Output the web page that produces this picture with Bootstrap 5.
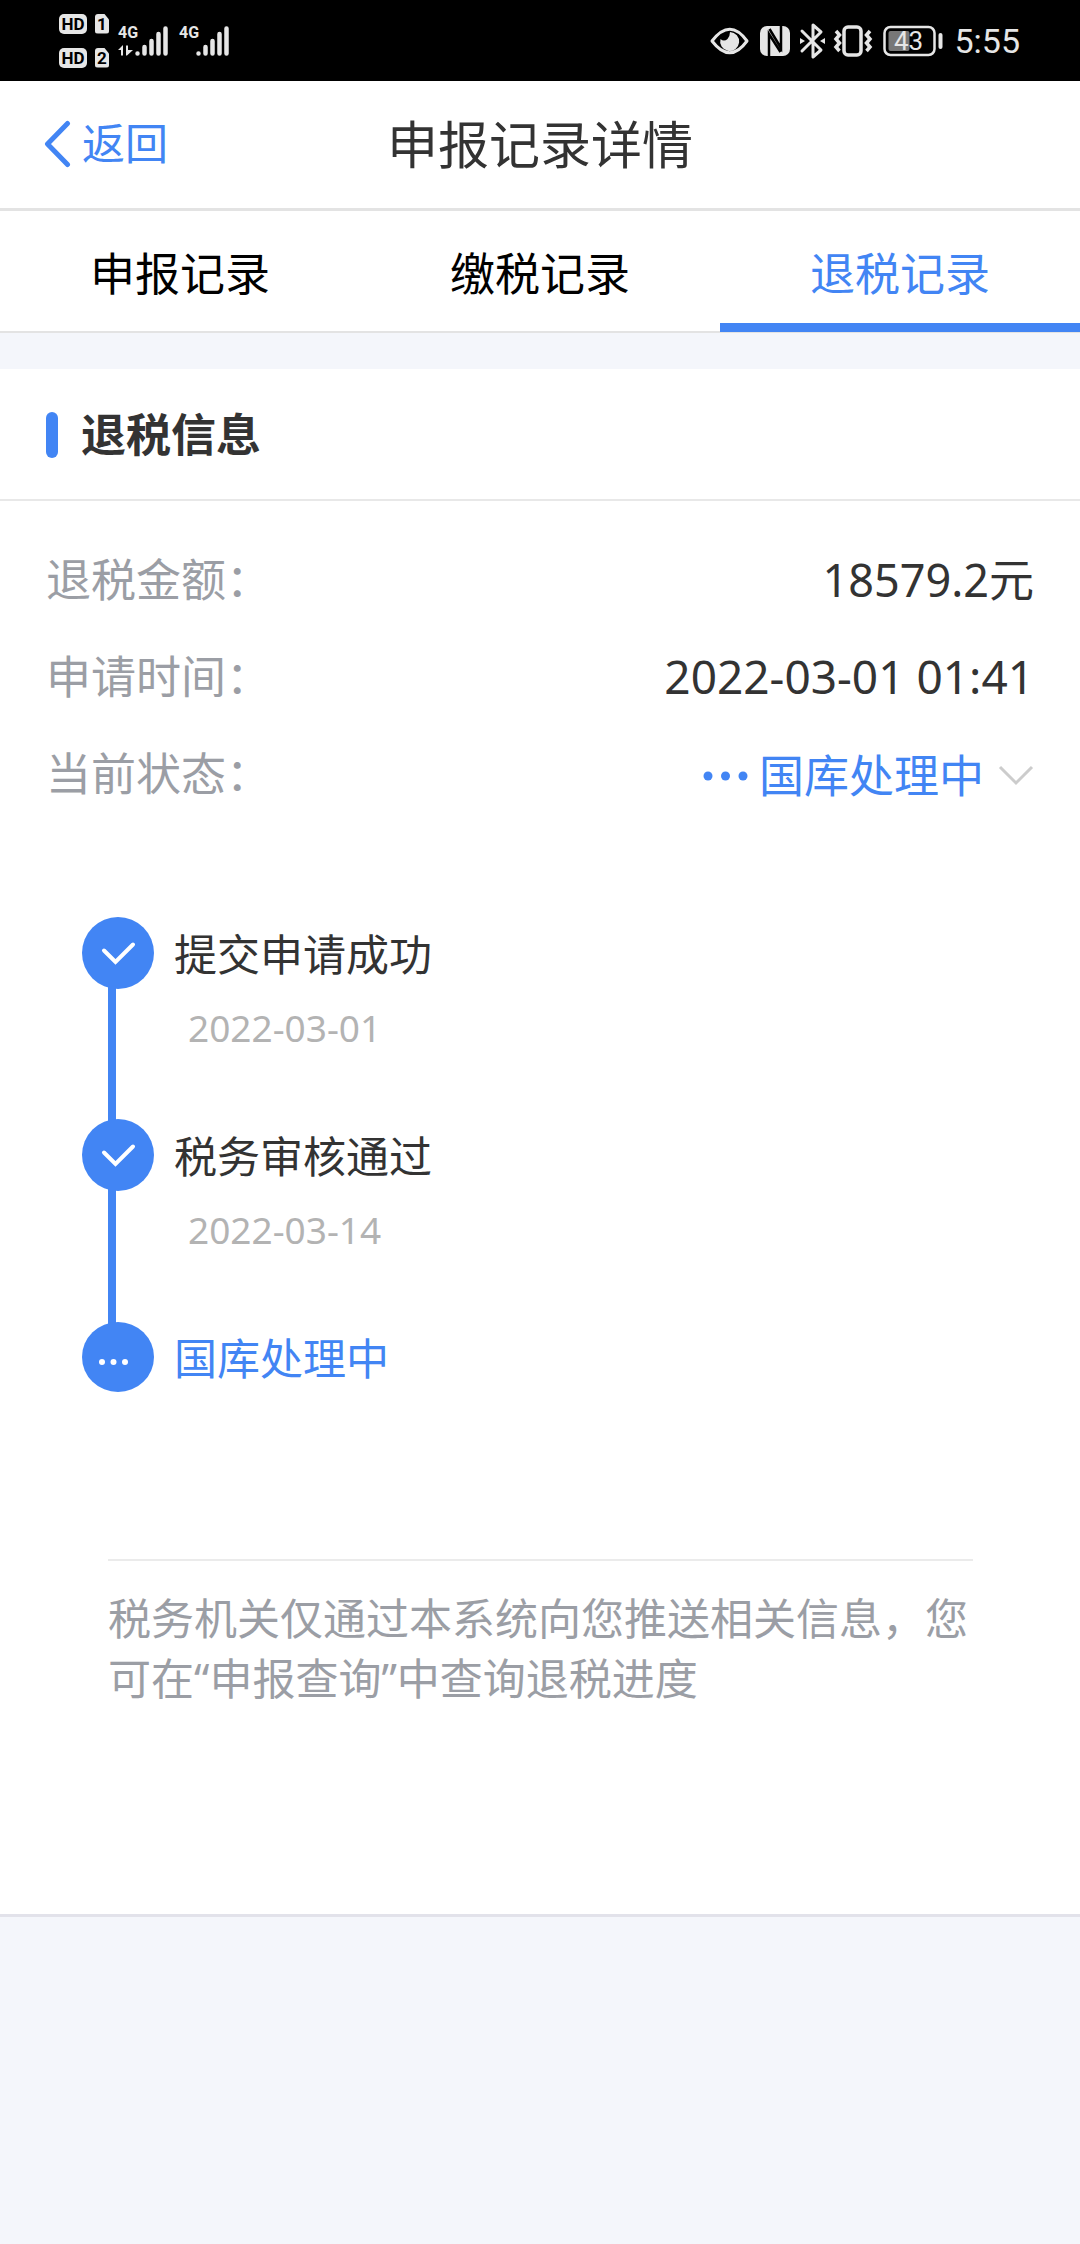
<!DOCTYPE html>
<html lang="zh-CN">
<head>
<meta charset="utf-8">
<meta name="viewport" content="width=device-width, initial-scale=1">
<title>申报记录详情</title>
<link href="https://cdn.jsdelivr.net/npm/bootstrap@5.3.0/dist/css/bootstrap.min.css" rel="stylesheet">
<style>
  :root { --brand: #4285f4; --ink: #333; --muted: #9b9ea5; --page: #f4f6fb; --rule: #e3e3e3; }
  body { font-family: "Noto Sans", "Noto Sans CJK SC", sans-serif; background: var(--page); color: var(--ink); }
  svg { display: block; flex: none; }

  .status-bar { height: 81px; padding: 0 60px 0 59px; background: #000; color: #e6e6e6; font-family: Roboto, sans-serif; }
  .hd-tags { gap: 14px; }
  .hd-tag, .sim-tag { height: 20px; line-height: 20px; font-size: 17px; font-weight: 700; background: #e6e6e6; color: #000; text-align: center; }
  .hd-tag { width: 28px; border-radius: 5px; }
  .sim-tag { width: 14px; border-radius: 3px; clip-path: polygon(0 0, 65% 0, 100% 30%, 100% 100%, 0 100%); }
  .clock { font-size: 34px; line-height: 40px; }

  .top-bar { height: 130px; padding-bottom: 2px; border-bottom: 3px solid var(--rule); }
  .side-cell { flex: 1 1 0; }
  .back-link { padding-left: 44px; gap: 10px; font-size: 43px; line-height: 60px; color: var(--brand); }
  .page-title { font-size: 51px; line-height: 60px; font-weight: 400; }

  .record-tabs { height: 122px; border-bottom: 2px solid var(--rule); }
  .record-tabs .nav-link { height: 121px; padding: 0; border: 0; border-bottom: 9px solid transparent; border-radius: 0; font-size: 45px; line-height: 126px; color: #000; }
  .record-tabs .nav-link.active { background: none; color: var(--brand); border-bottom-color: var(--brand); }

  .info-panel { margin-top: 36px; border-bottom: 3px solid #e2e2ea; padding-bottom: 205px; }
  .panel-head { height: 132px; padding: 2px 46px 0; gap: 23px; border-bottom: 2px solid #e8e8e8; }
  .head-bar { width: 12px; height: 46px; border-radius: 6px; background: var(--brand); }
  .panel-head h2 { font-size: 45px; line-height: 60px; font-weight: 700; }

  .detail-list { padding: 30px 46px 0; font-size: 45px; line-height: 97px; }
  .detail-list dt { font-weight: 400; color: var(--muted); }
  .detail-list .date-value { font-size: 46px; }
  .state-toggle { gap: 10px; padding: 0; border: 0; background: none; color: var(--brand); font-size: 45px; line-height: 101px; }
  .state-toggle svg:last-child { margin-left: 4px; }

  .steps { margin-top: 91px; padding: 0 82px; }
  .step-item { gap: 20px; }
  .step-item:not(:last-child) { min-height: 202px; }
  .step-line { flex: 1 1 auto; width: 8px; margin: -3px 0 -3px 26px; background: var(--brand); }
  .step-name { font-size: 43px; line-height: 76px; }
  .step-name.current { color: var(--brand); }
  .step-date { padding-left: 14px; font-size: 37px; line-height: 70px; color: #b3b3b3; }

  .notice { margin: 162px 107px 0 108px; padding-top: 28px; border-top: 2px solid #ebebeb; font-size: 43px; line-height: 60px; color: var(--muted); }
</style>
<script src="https://cdn.jsdelivr.net/npm/bootstrap@5.3.0/dist/js/bootstrap.bundle.min.js"></script>
</head>
<body>

<div class="status-bar d-flex justify-content-between align-items-center">
  <div class="d-flex align-items-center">
    <div class="hd-tags d-flex flex-column">
      <div class="d-flex gap-1"><span class="hd-tag">HD</span><span class="sim-tag ms-1">1</span></div>
      <div class="d-flex gap-1"><span class="hd-tag">HD</span><span class="sim-tag ms-1">2</span></div>
    </div>
    <svg class="ms-2" width="120" height="40" viewBox="2 0 120 40" fill="#e6e6e6" stroke="#e6e6e6">
      <g stroke="none" font-family="Roboto, sans-serif" font-weight="700" font-size="16">
        <text x="3" y="17">4G</text><text x="64" y="17">4G</text>
        <path d="M3 29L8 24V34.500H6V29ZM11 24.500H13V29H18L12 34.500H11Z"/>
      </g>
      <g stroke-width="4.500" stroke-linecap="round">
        <path d="M22.500 32.500v.1M29.500 26v6.500M36.500 20v12.500M43.500 13v19.500M50.500 7.500v25M83.500 32.500v.1M90.500 26v6.500M97.500 20v12.500M104.500 13v19.500M111.500 7.500v25"/>
      </g>
    </svg>
  </div>
  <div class="d-flex align-items-center">
    <svg width="244" height="40" viewBox="0 0 244 40" fill="none" stroke="#e6e6e6" stroke-width="3">
      <!-- eye comfort -->
      <path d="M2 20Q20-3.500 37 20Q20 43.500 2 20Z" stroke-linejoin="round"/>
      <path d="M20 11A9.500 9.500 0 1 1 10.500 18Q14 21 17.500 18Q20 15 20 11Z" fill="#e6e6e6" stroke="none"/>
      <!-- NFC -->
      <rect x="50" y="5" width="30" height="30" rx="7" fill="#e6e6e6" stroke="none"/>
      <path d="M59 36V13L70.500 31M71 4V27L59.500 8" stroke="#000" stroke-width="2.500"/>
      <!-- Bluetooth -->
      <path d="M92 10L111 29L103 36V4L111 11L92 30" stroke-linejoin="round" stroke-linecap="round"/>
      <path d="M90 17L95 20L90 23ZM115 17L110 20L115 23Z" fill="#e6e6e6" stroke="none"/>
      <!-- vibrate -->
      <rect x="134" y="6" width="17" height="28" rx="4" stroke-width="3.500"/>
      <path d="M126 10L129.500 14L126 18L129.500 22L126 26L129.500 30M160 10L156.500 14L160 18L156.500 22L160 26L156.500 30" stroke-width="3.500"/>
      <!-- battery -->
      <rect x="174.500" y="6" width="50" height="28" rx="6" stroke-width="2.500"/>
      <rect x="178.500" y="10" width="21" height="20" rx="2" fill="#777" stroke="none"/>
      <rect x="228.500" y="12" width="4" height="16" rx="2" fill="#e6e6e6" stroke="none"/>
      <text x="184" y="29" font-family="Roboto, sans-serif" font-size="26" fill="#e6e6e6" stroke="none">43</text>
    </svg>
    <span class="clock">5:55</span>
  </div>
</div>

<header class="top-bar d-flex align-items-center bg-white">
  <div class="side-cell">
    <a href="#" class="back-link d-inline-flex align-items-center text-decoration-none">
      <svg width="28" height="48" viewBox="0 0 28 48" fill="none" stroke="#4285f4" stroke-width="5" stroke-linecap="round" stroke-linejoin="round"><path d="M23.500 3.500L3.500 24L23.500 44.500"/></svg>
      返回
    </a>
  </div>
  <h1 class="page-title mb-0">申报记录详情</h1>
  <div class="side-cell"></div>
</header>

<nav class="record-tabs nav nav-pills nav-justified bg-white">
  <a class="nav-link" href="#">申报记录</a>
  <a class="nav-link" href="#">缴税记录</a>
  <a class="nav-link active" href="#" aria-current="page">退税记录</a>
</nav>

<main class="info-panel bg-white">
  <div class="panel-head d-flex align-items-center">
    <span class="head-bar"></span>
    <h2 class="mb-0">退税信息</h2>
  </div>

  <dl class="detail-list mb-0">
    <div class="d-flex justify-content-between"><dt>退税金额：</dt><dd class="mb-0">18579.2元</dd></div>
    <div class="d-flex justify-content-between"><dt>申请时间：</dt><dd class="date-value mb-0">2022-03-01 01:41</dd></div>
    <div class="d-flex justify-content-between"><dt>当前状态：</dt>
      <dd class="mb-0">
        <button type="button" class="state-toggle d-flex align-items-center" aria-expanded="true" aria-controls="refundSteps">
          <svg width="46" height="12" viewBox="0 0 46 12" fill="#4285f4"><circle cx="5" cy="6" r="4.500"/><circle cx="22.500" cy="6" r="4.500"/><circle cx="40" cy="6" r="4.500"/></svg>
          国库处理中
          <svg width="36" height="22" viewBox="0 0 36 22" fill="none" stroke="#ccc" stroke-width="3"><path d="M2 2L18 18L34 2"/></svg>
        </button>
      </dd>
    </div>
  </dl>

  <ol id="refundSteps" class="steps list-unstyled mb-0">
    <li class="step-item d-flex">
      <div class="d-flex flex-column">
        <svg width="72" height="72" viewBox="0 0 72 72"><circle cx="36" cy="36" r="36" fill="#4285f4"/><path d="M22 33.500L33.500 45L51 27.500" fill="none" stroke="#fff" stroke-width="4" stroke-linecap="round"/></svg>
        <span class="step-line"></span>
      </div>
      <div><div class="step-name">提交申请成功</div><div class="step-date">2022-03-01</div></div>
    </li>
    <li class="step-item d-flex">
      <div class="d-flex flex-column">
        <svg width="72" height="72" viewBox="0 0 72 72"><circle cx="36" cy="36" r="36" fill="#4285f4"/><path d="M22 33.500L33.500 45L51 27.500" fill="none" stroke="#fff" stroke-width="4" stroke-linecap="round"/></svg>
        <span class="step-line"></span>
      </div>
      <div><div class="step-name">税务审核通过</div><div class="step-date">2022-03-14</div></div>
    </li>
    <li class="step-item d-flex">
      <svg width="72" height="72" viewBox="0 0 72 72"><ellipse cx="36" cy="36" rx="36" ry="35" fill="#4285f4"/><g fill="#fff"><circle cx="20" cy="41" r="3"/><circle cx="31.500" cy="41" r="3"/><circle cx="43" cy="41" r="3"/></g></svg>
      <div class="step-name current">国库处理中</div>
    </li>
  </ol>

  <p class="notice mb-0">税务机关仅通过本系统向您推送相关信息，您可在“申报查询”中查询退税进度</p>
</main>

</body>
</html>
